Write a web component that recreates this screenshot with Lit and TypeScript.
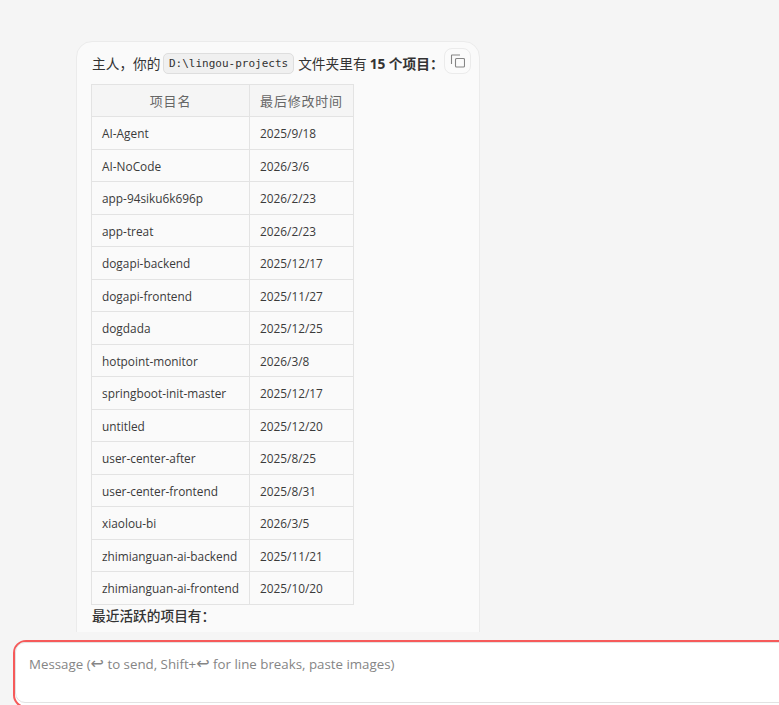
import { LitElement, html, css } from "lit";
import { customElement } from "lit/decorators.js";

const rows: [string, string][] = [
  ["AI-Agent", "2025/9/18"],
  ["AI-NoCode", "2026/3/6"],
  ["app-94siku6k696p", "2026/2/23"],
  ["app-treat", "2026/2/23"],
  ["dogapi-backend", "2025/12/17"],
  ["dogapi-frontend", "2025/11/27"],
  ["dogdada", "2025/12/25"],
  ["hotpoint-monitor", "2026/3/8"],
  ["springboot-init-master", "2025/12/17"],
  ["untitled", "2025/12/20"],
  ["user-center-after", "2025/8/25"],
  ["user-center-frontend", "2025/8/31"],
  ["xiaolou-bi", "2026/3/5"],
  ["zhimianguan-ai-backend", "2025/11/21"],
  ["zhimianguan-ai-frontend", "2025/10/20"],
];

@customElement("app-root")
export class AppRoot extends LitElement {
  static styles = css`
    :host {
      display: block;
      width: 779px;
      height: 705px;
      overflow: hidden;
      background: #f5f5f5;
      color: #3b3b3b;
      font-family: "Open Sans", "Noto Sans", "Noto Sans CJK SC", sans-serif;
      font-size: 13px;
    }
    .chat {
      height: 631.5px;
      overflow: hidden;
      padding: 41px 0 0 76px;
      box-sizing: border-box;
    }
    .card {
      position: relative;
      width: 404px;
      height: 620px;
      box-sizing: border-box;
      background: #fafafa;
      border: 1px solid #ebebeb;
      border-radius: 16px;
      padding: 9px 14px 0;
    }
    .line {
      display: flex;
      align-items: center;
      height: 24px;
      margin: 0 0 9px 1px;
      font-size: 13.7px;
      white-space: nowrap;
      color: #333;
    }
    b { font-weight: 700; margin-left: 3px; }
    code {
      font-family: "DejaVu Sans Mono", "Liberation Mono", monospace;
      font-size: 11px;
      background: #f0f0f0;
      border: 1px solid #dedede;
      border-radius: 5px;
      padding: 2px 5px;
      margin: 0 4px 0 2.5px;
      line-height: 15px;
    }
    .copy {
      position: absolute;
      top: 6px;
      right: 8px;
      width: 27px;
      height: 26px;
      box-sizing: border-box;
      border: 1px solid #ebebeb;
      border-radius: 8px;
      background: #fbfbfb;
      display: flex;
      align-items: center;
      justify-content: center;
      color: #858585;
    }
    table {
      border-collapse: collapse;
      table-layout: fixed;
      width: 262px;
      font-size: 11.85px;
    }
    th, td {
      border: 1px solid #e3e3e3;
      padding: 0 10px;
      height: 32.5px;
      box-sizing: border-box;
      white-space: nowrap;
    }
    th {
      height: 32.4px;
      background: #f5f5f5;
      font-weight: 400;
      color: #666;
      font-size: 13px;
      letter-spacing: 0.8px;
      text-align: center;
    }
    td { background: #fafafa; }
    .c1 { width: 158px; }
    .c2 { width: 104px; }
    .after {
      margin: 1px 0 0 1px;
      font-size: 13.7px;
      font-weight: 500;
      line-height: 20px;
      color: #333;
    }
    .composer {
      margin: 8px 0 0 12.5px;
      width: 800px;
      height: 68px;
      box-sizing: border-box;
      border: 2.5px solid #f65a5a;
      border-radius: 13px;
      background: #ffffff;
      padding: 0.5px 0 0 0.5px;
    }
    .field {
      height: 60.5px;
      box-sizing: border-box;
      border: 1px solid #e2e2e2;
      border-radius: 10px;
      padding: 11px 13px;
      color: #858585;
      font-size: 13.3px;
      line-height: 20px;
      white-space: nowrap;
    }
    .key {
      font-family: "DejaVu Sans", sans-serif;
      font-size: 16px;
      line-height: 16px;
    }
  `;

  render() {
    return html`
      <div class="chat">
        <div class="card">
          <div class="line">
            主人，你的<code>D:\\lingou-projects</code>文件夹里有<b>15 个项目：</b>
          </div>
          <div class="copy">
            <svg width="15" height="15" viewBox="0 0 15 15" fill="none" stroke="currentColor" stroke-width="1.1">
              <rect x="5.5" y="4.5" width="9" height="8.5" rx="1"></rect>
              <path d="M1.5 10V1.5a.5.5 0 0 1 .5-.5h8"></path>
            </svg>
          </div>
          <table>
            <thead>
              <tr><th class="c1">项目名</th><th class="c2">最后修改时间</th></tr>
            </thead>
            <tbody>
              ${rows.map(([n, d]) => html`<tr><td>${n}</td><td>${d}</td></tr>`)}
            </tbody>
          </table>
          <div class="after">最近活跃的项目有：</div>
        </div>
      </div>
      <div class="composer">
        <div class="field">Message (<span class="key">↩</span> to send, Shift+<span class="key">↩</span> for line breaks, paste images)</div>
      </div>
    `;
  }
}
